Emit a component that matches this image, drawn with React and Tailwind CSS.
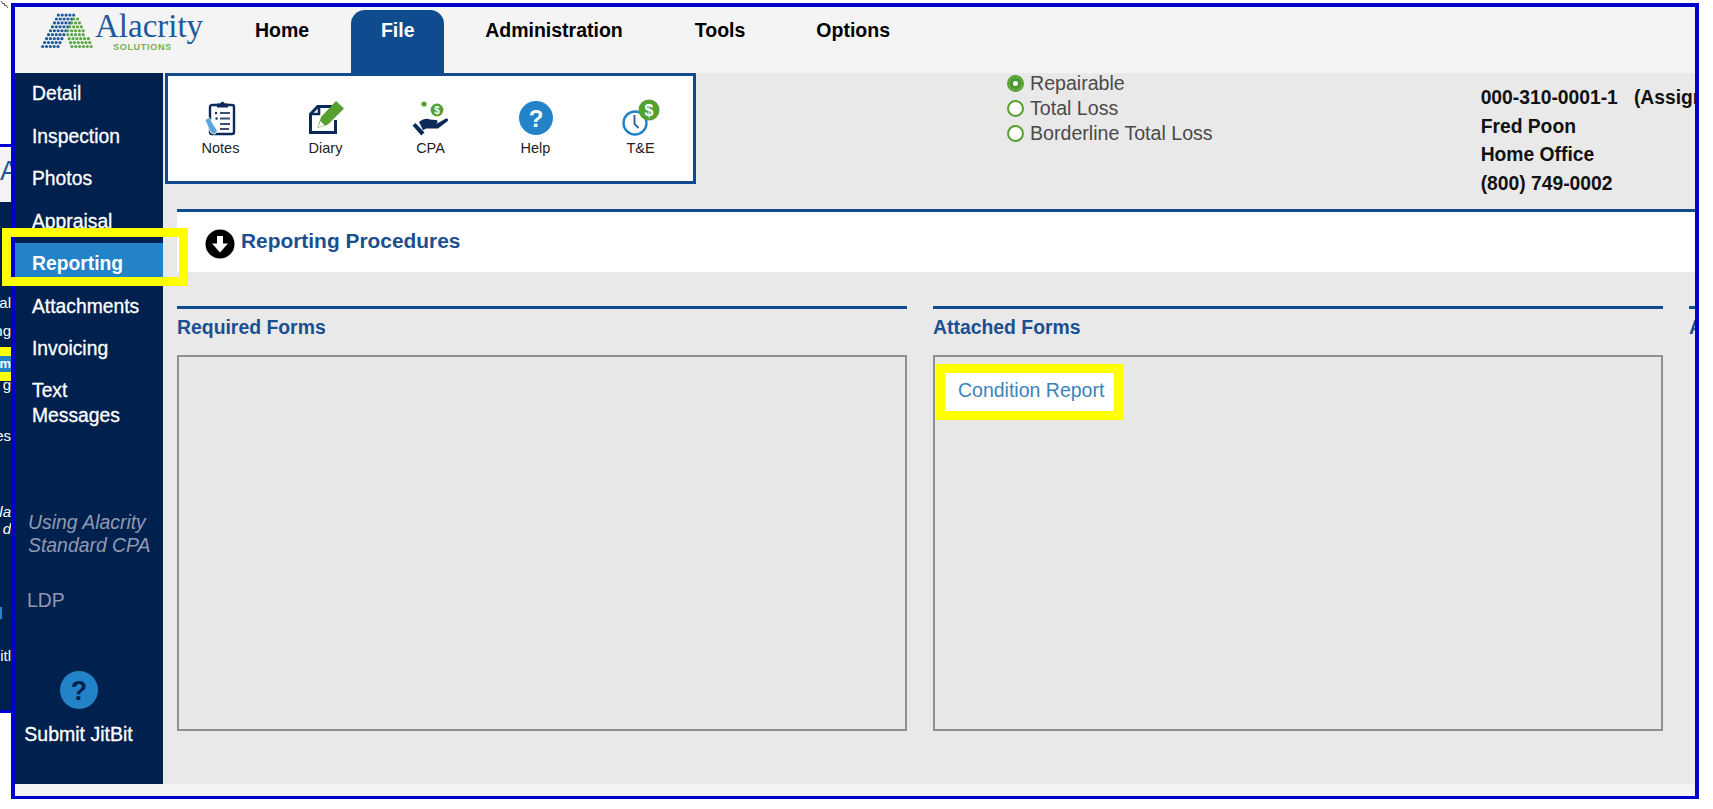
import React from "react";

const SANS = "font-['Liberation_Sans',Arial,sans-serif]";

function LogoMark() {
  const dots = [];
  for (let r = 0; r < 9; r++) {
    const y = 2 + r * 4.3;
    const xs = 19 - r * 2.15;
    for (let c = 0; c < 5; c++) dots.push(<circle key={"b" + r + c} cx={xs + c * 4.2} cy={y} r="1.75" fill="#21589c" />);
  }
  for (let r = 1; r < 9; r++) {
    const y = 2 + r * 4.3;
    const d = y - 6;
    const left = d < 15 ? 36 - d * 0.5 : 28.5 + (d - 15) * 0.35;
    const right = 41 + d * 0.52;
    for (let x = left; x <= right; x += 4.2) dots.push(<circle key={"g" + r + x} cx={x} cy={y} r="1.75" fill="#5aa846" />);
  }
  return (
    <svg width="53" height="37" viewBox="0 0 58 40" className="shrink-0">
      {dots}
    </svg>
  );
}

function NotesIcon() {
  return (
    <svg width="36" height="36" viewBox="0 0 36 36">
      <rect x="7" y="5" width="24" height="29" rx="2" fill="#fff" stroke="#0b2a5a" strokeWidth="2.4" />
      <path d="M14 6.5V3.5h3.2a2.4 2.4 0 0 1 4.6 0H25v4H14z" fill="#0b2a5a" />
      <g stroke="#3d4f70" strokeWidth="2">
        <path d="M17 13h10M17 18.5h10M17 24h10M17 29h9" />
      </g>
      <g fill="#0b2a5a">
        <circle cx="13" cy="13" r="1.2" />
        <circle cx="13.5" cy="18.5" r="1.2" />
      </g>
      <path d="M2 20l4-2.6 8.5 13.4-2.6 3.4-4.2-1.4z" fill="#5ba3dc" stroke="#fff" strokeWidth=".8" />
    </svg>
  );
}

function DiaryIcon() {
  return (
    <svg width="42" height="36" viewBox="0 0 42 36">
      <path d="M12 5h15v3H13.4L7 14.5V31h22V20h3v14H4V13.5z" fill="#0b2a5a" />
      <path d="M7 14h7V8" fill="none" stroke="#0b2a5a" strokeWidth="2.6" />
      <path d="M31 1l8 7.5-16 16-10.5 3.5 3.5-11z" fill="#55a02f" />
      <path d="M15.5 21l-2.5 6.5 6.5-2.3z" fill="#fff" />
    </svg>
  );
}

function CpaIcon() {
  return (
    <svg width="40" height="36" viewBox="0 0 40 36">
      <circle cx="13" cy="4" r="2.6" fill="#55a02f" />
      <circle cx="26" cy="10" r="6.4" fill="#55a02f" />
      <text x="26" y="13.6" textAnchor="middle" fontSize="10" fontWeight="700" fill="#fff" fontFamily="Liberation Sans">$</text>
      <path d="M8 22c4-3 8-4 11-2.5l6 .6c2 .3 2 3 0 3.2l-6 .3 7.5-.4 8-4.5c2-1 3.6 1 2 2.6L27 28.5H15l-3 1.8z" fill="#0b2a5a" />
      <path d="M1.5 25.5l3-2.6 9 9.6-3.2 3z" fill="#0b2a5a" />
    </svg>
  );
}

function HelpIcon({ size = 34, bg = "#2283c8", fg = "#fff" }) {
  return (
    <svg width={size} height={size} viewBox="0 0 34 34">
      <circle cx="17" cy="17" r="17" fill={bg} />
      <text x="17" y="25.5" textAnchor="middle" fontSize="24" fontWeight="700" fill={fg} fontFamily="Liberation Sans">?</text>
    </svg>
  );
}

function TeIcon() {
  return (
    <svg width="42" height="38" viewBox="0 0 42 38">
      <circle cx="15" cy="24" r="11.5" fill="#fff" stroke="#2283c8" strokeWidth="2.4" />
      <path d="M14.5 16v9l4 4" fill="none" stroke="#2c5b92" strokeWidth="1.8" />
      <circle cx="29" cy="11" r="10.5" fill="#55a02f" />
      <text x="29" y="17" textAnchor="middle" fontSize="16" fontWeight="700" fill="#fff" fontFamily="Liberation Sans">$</text>
    </svg>
  );
}

function DownIcon() {
  return (
    <svg width="30" height="30" viewBox="0 0 30 30" className="shrink-0 mt-[3px]">
      <circle cx="15" cy="15" r="14.5" fill="#000" />
      <path d="M12 7h6v7.5h5L15 23.5 7 14.5h5z" fill="#fff" />
    </svg>
  );
}

function Radio({ checked, label }) {
  return (
    <div className="flex items-center h-[25px]">
      <span className="w-[17px] h-[17px] rounded-full border-2 border-[#55a02f] bg-white flex items-center justify-center shrink-0 mr-[6px]">
        {checked && <span className="w-[13px] h-[13px] rounded-full border-[4px] border-[#4b9a2e] bg-white" />}
      </span>
      <span className="text-[19.6px] text-[#4a4a4a] whitespace-nowrap">{label}</span>
    </div>
  );
}

const tools = [
  ["Notes", <NotesIcon key="n" />],
  ["Diary", <DiaryIcon key="d" />],
  ["CPA", <CpaIcon key="c" />],
  ["Help", <HelpIcon key="h" />],
  ["T&E", <TeIcon key="t" />],
];

const navStroke = "[-webkit-text-stroke:0.3px_white]";

function SideItem({ label, active }) {
  return (
    <div className="h-[42.5px]">
      <div className={`h-[35px] pt-[8px] pl-[17px] flex items-center text-[19.3px] text-white ${active ? "bg-[#2283c8] font-bold" : navStroke}`}>
        {label}
      </div>
    </div>
  );
}

function Backdrop() {
  const frag = "flex justify-end whitespace-nowrap text-[15px] leading-[20px] text-white";
  return (
    <div className="absolute left-0 top-[144px] w-[11px] h-[569px] border-y-[3px] border-[#0000cc] flex flex-col overflow-hidden">
      <div className="h-[55px] pb-[6px] bg-[#f4f4f4] flex justify-start items-center text-[27px] text-[#21589c] shrink-0">A</div>
      <div className="flex-1 bg-[#00204e] flex flex-col">
        <div className={`${frag} mt-[91px]`}>al</div>
        <div className={`${frag} mt-[8px]`}>ng</div>
        <div className="h-[9px] mt-[6px] bg-[#ffff00]" />
        <div className="h-[16px] bg-[#2283c8] flex justify-end text-[13px] leading-[16px] text-white font-bold">m</div>
        <div className="h-[9px] bg-[#ffff00]" />
        <div className={`${frag} mt-[-6px]`}>g</div>
        <div className={`${frag} mt-[31px] text-[13px]`}>ges</div>
        <div className={`${frag} mt-[56px] italic text-[#9aa5b8]`}>la</div>
        <div className={`${frag} mt-[-3px] italic text-[#9aa5b8]`}>d</div>
        <div className="w-[2px] h-[12px] mt-[68px] bg-[#2283c8]" />
        <div className={`${frag} mt-[27px]`}>itl</div>
      </div>
    </div>
  );
}

export default function App() {
  return (
    <div className={`relative w-[1713px] h-[809px] bg-white overflow-hidden ${SANS}`}>
      <Backdrop />
      <svg width="9" height="9" viewBox="0 0 9 9" className="absolute left-0 top-0">
        <path d="M1 1l2 3 1-1 1 3 1-1 2 3" fill="none" stroke="#555" strokeWidth="1" />
      </svg>

      <div className="relative ml-[11px] pt-[3px]">
        <div className="w-[1688px] h-[796px] border-x-4 border-t-4 border-b-[3px] border-[#0000cc] flex flex-col overflow-hidden bg-[#f4f4f4]">
          {/* Header */}
          <header className="h-[66px] shrink-0 flex bg-[#f4f4f4]">
            <div className="w-[206px] shrink-0 flex pl-[26px] pt-[6px] items-start">
              <LogoMark />
              <div className="ml-[1px] flex flex-col items-start">
                <span className="font-['Liberation_Serif',serif] text-[33px] leading-[33px] text-[#21589c] -mt-[3px]">Alacrity</span>
                <span className="text-[9px] leading-[9px] font-bold tracking-[0.7px] text-[#6fb257] ml-[18px]">SOLUTIONS</span>
              </div>
            </div>
            <nav className="flex items-start text-[19.5px] font-bold text-black pl-[34px]">
              <a className="pt-[9px] mr-[42px]">Home</a>
              <a className="mt-[3px] h-[63px] w-[93px] rounded-t-[14px] bg-[#0f4c8f] text-white flex justify-center pt-[6px] mr-[41px]">File</a>
              <a className="pt-[9px] mr-[72px]">Administration</a>
              <a className="pt-[9px] mr-[71px]">Tools</a>
              <a className="pt-[9px]">Options</a>
            </nav>
          </header>

          {/* Body */}
          <div className="flex-1 min-h-0 flex">
            <aside className="w-[148px] shrink-0 bg-[#00204e] flex flex-col">
              <SideItem label="Detail" />
              <SideItem label="Inspection" />
              <SideItem label="Photos" />
              <SideItem label="Appraisal" />
              <SideItem label="Reporting" active />
              <SideItem label="Attachments" />
              <SideItem label="Invoicing" />
              <div className={`pl-[17px] pt-[7px] text-[19.3px] leading-[25px] text-white ${navStroke}`}>
                Text
                <br />
                Messages
              </div>
              <div className="pl-[13px] mt-[83px] text-[19.4px] leading-[23px] italic text-[#8f9bb0] whitespace-nowrap">
                Using Alacrity
                <br />
                Standard CPA
              </div>
              <div className="pl-[12px] mt-[31px] text-[19.4px] leading-[24px] text-[#8f9bb0]">LDP</div>
              <div className="w-[127px] mt-[59px] flex flex-col items-center">
                <HelpIcon size={38} bg="#2283c8" fg="#00204e" />
                <div className={`mt-[13px] text-[19.5px] leading-[24px] text-white whitespace-nowrap ${navStroke}`}>Submit JitBit</div>
              </div>
            </aside>

            <main className="flex-1 min-w-0 bg-[#e9e9e9] overflow-hidden">
              <div className="h-[136px] flex items-start">
                <div className="ml-[2px] w-[531px] h-[111px] border-[3px] border-[#0f4c8f] bg-white flex shrink-0">
                  {tools.map(([label, icon]) => (
                    <div key={label} className="w-[105px] flex flex-col items-center">
                      <div className="h-[38px] mt-[23px] flex items-center justify-center">{icon}</div>
                      <div className="text-[14.5px] leading-[18px] mt-[2px] text-[#222]">{label}</div>
                    </div>
                  ))}
                </div>
                <div className="ml-[311px] shrink-0 mt-[-2px]">
                  <Radio checked label="Repairable" />
                  <Radio label="Total Loss" />
                  <Radio label="Borderline Total Loss" />
                </div>
                <div className="ml-[268px] mt-[11px] text-[19.3px] leading-[28.7px] font-bold text-[#111] whitespace-pre shrink-0">
                  {"000-310-0001-1   (Assigned)\nFred Poon\nHome Office\n(800) 749-0002"}
                </div>
              </div>

              <section className="ml-[14px] h-[63px] border-t-[3px] border-[#0f4c8f] bg-white flex items-center pl-[28px]">
                <DownIcon />
                <h1 className="ml-[6px] -mt-[3px] text-[20.9px] font-bold text-[#1b4f8f]">Reporting Procedures</h1>
              </section>

              <div className="ml-[14px] mt-[34px] flex gap-[26px]">
                <FormColumn title="Required Forms" />
                <FormColumn title="Attached Forms">
                  <a className="inline-block ml-[1px] mt-[7px] border-[9px] border-[#ffff00] bg-white pl-[13px] pr-[10px] h-[56px] leading-[34px] text-[19.5px] text-[#3d83bb] whitespace-nowrap">
                    Condition Report
                  </a>
                </FormColumn>
                <div className="w-[300px] shrink-0 border-t-[3px] border-[#0f4c8f] pt-[6px] text-[19.4px] leading-[24px] font-bold text-[#1b4f8f] whitespace-nowrap">
                  Available Forms
                </div>
              </div>
            </main>
          </div>

          <div className="h-[12px] shrink-0 bg-[#f4f4f4]" />
        </div>
      </div>

      {/* Annotation rectangle over the Reporting item */}
      <div className="absolute left-[2px] top-[228px] w-[186px] h-[58px] border-[9px] border-[#ffff00]" />
    </div>
  );
}

function FormColumn({ title, children }) {
  return (
    <div className="w-[730px] shrink-0 border-t-[3px] border-[#0f4c8f]">
      <div className="pt-[6px] h-[46px] text-[19.4px] leading-[24px] font-bold text-[#1b4f8f]">{title}</div>
      <div className="h-[376px] border-2 border-[#8f8f8f] bg-[#e8e8e6]">{children}</div>
    </div>
  );
}
